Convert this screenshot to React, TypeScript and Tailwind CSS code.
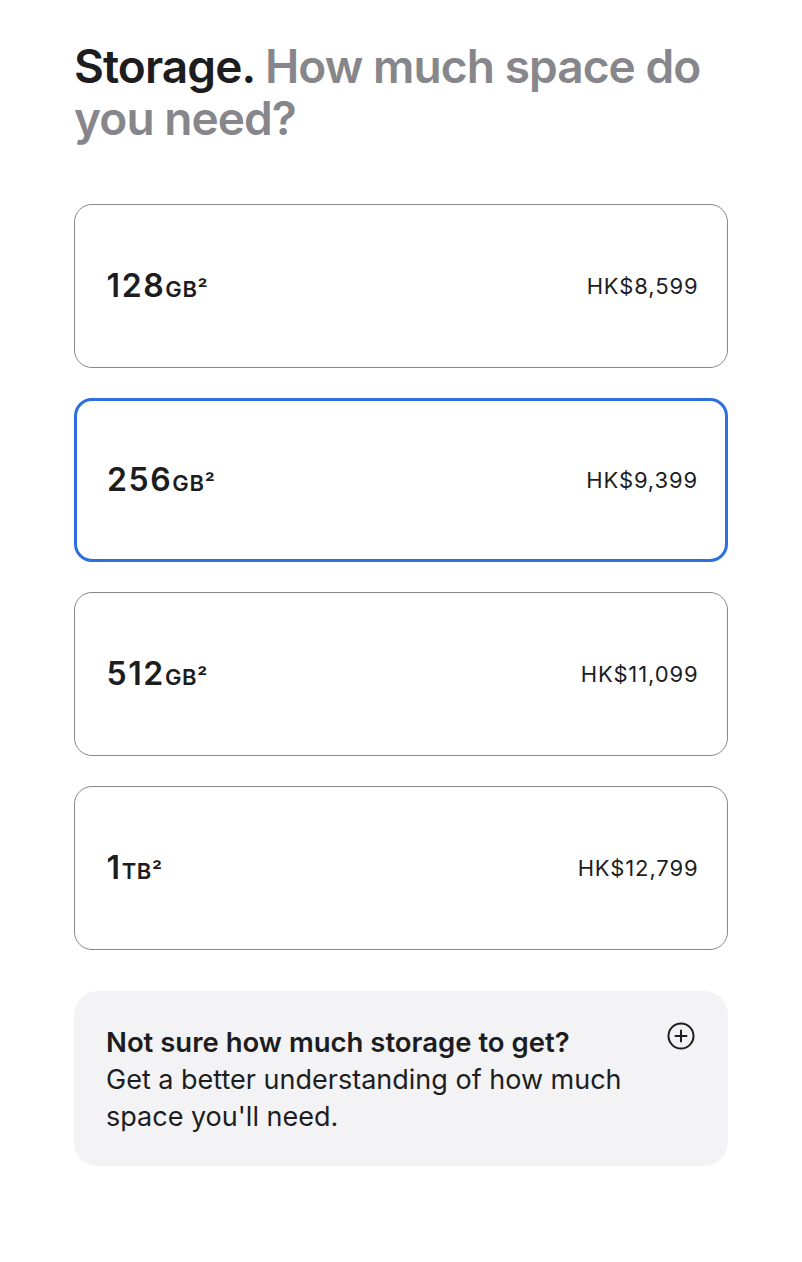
import React, { useState } from 'react';

const options = [
  { size: '128', unit: 'GB', price: 'HK$8,599' },
  { size: '256', unit: 'GB', price: 'HK$9,399' },
  { size: '512', unit: 'GB', price: 'HK$11,099' },
  { size: '1', unit: 'TB', price: 'HK$12,799' },
];

const PlusCircle: React.FC = () => (
  <svg width="28" height="28" viewBox="0 0 28 28" fill="none" stroke="#1d1d1f" strokeWidth="2" strokeLinecap="round">
    <circle cx="14" cy="14" r="12.5" />
    <path d="M14 8.5v11M8.5 14h11" />
  </svg>
);

const App: React.FC = () => {
  const [selected, setSelected] = useState(1);

  return (
    <div className="min-h-[1262px] bg-white font-['Inter','Liberation_Sans',sans-serif] text-[#1d1d1f]">
      <div className="w-[654px] ml-[74px] pt-[40px]">
        {/* Heading */}
        <h2 className="text-[46px] leading-[52px] font-semibold tracking-[-0.02em]">
          Storage. <span className="text-[#86868b]">How much space do you need?</span>
        </h2>

        {/* Storage options */}
        <div className="mt-[60px] flex flex-col gap-[30px]">
          {options.map((opt, i) => {
            const active = i === selected;
            return (
              <button
                key={opt.size}
                onClick={() => setSelected(i)}
                className={
                  active
                    ? 'h-[164px] w-full rounded-[18px] border-[3px] border-[#2d6fdf] bg-white flex items-center justify-between pl-[30px] pr-[27px] text-left'
                    : 'h-[164px] w-full rounded-[18px] border-[1.5px] border-[#86868b] bg-white flex items-center justify-between pl-[31.5px] pr-[28.5px] text-left'
                }
              >
                <span className="flex items-baseline font-semibold">
                  <span className="text-[32px] tracking-[0.05em]">{opt.size}</span>
                  <span className="text-[22px] tracking-[0.03em]">{opt.unit}²</span>
                </span>
                <span className="text-[22px] font-normal tracking-[0.04em]">{opt.price}</span>
              </button>
            );
          })}
        </div>

        {/* Help box */}
        <div className="mt-[41px] rounded-[24px] bg-[#f3f3f5] pl-[32px] pr-[33px] pt-[33px] pb-[31px] flex items-start justify-between">
          <div className="leading-[37px]">
            <p className="text-[27.5px] font-semibold">Not sure how much storage to get?</p>
            <p className="text-[27px] font-normal w-[540px]">Get a better understanding of how much space you'll need.</p>
          </div>
          <div className="-mt-[2px]">
            <PlusCircle />
          </div>
        </div>
      </div>
    </div>
  );
};

export default App;
